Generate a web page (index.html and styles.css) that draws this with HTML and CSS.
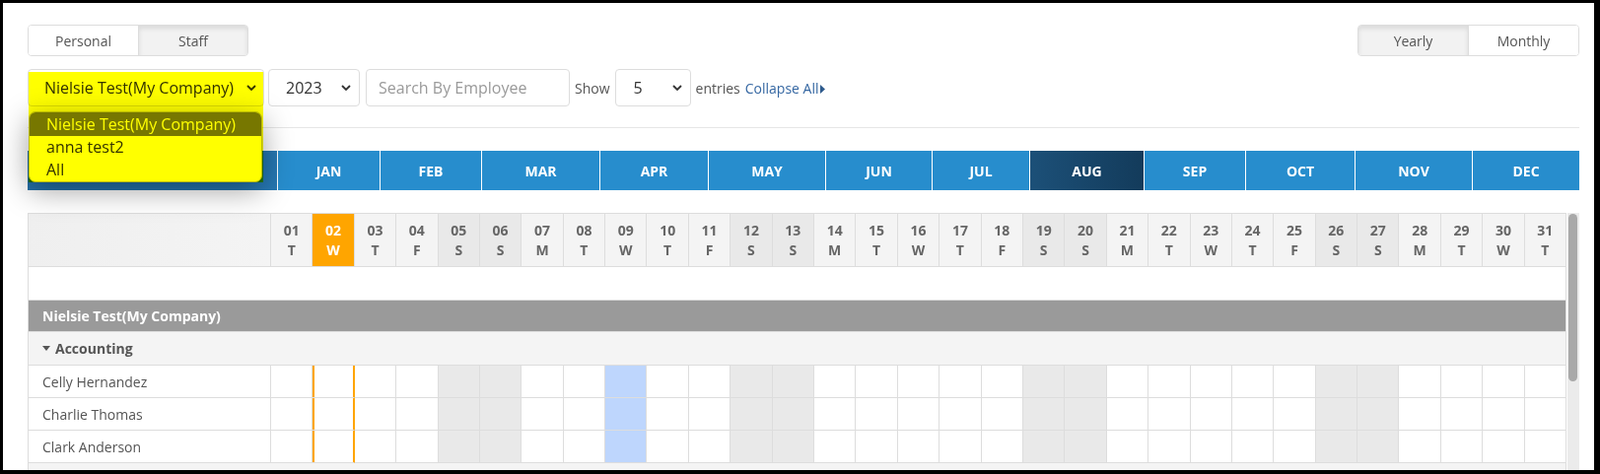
FILE: index.html
```html
<!DOCTYPE html>
<html lang="en">
<head>
    <meta charset="UTF-8">
    <title>Leave Calendar</title>

    <link rel="stylesheet" href="styles.css">
</head>
<body>
<div class="frame">
    <!-- View switches -->
    <div class="modes">
        <div class="seg">
            <button>Personal</button>
            <button class="on">Staff</button>
        </div>
        <div class="seg seg-right">
            <button class="on">Yearly</button>
            <button>Monthly</button>
        </div>
    </div>

    <!-- Filters -->
    <div class="filters">
        <div class="company-pick">
            <div class="select company">
                Nielsie Test(My Company)
                <svg class="chev" width="10" height="6" viewBox="0 0 10 6"><polyline points="1,1 5,5 9,1" fill="none" stroke="#333" stroke-width="1.8"/></svg>
            </div>
            <ul class="options">
                <li class="picked">Nielsie Test(My Company)</li>
                <li>anna test2</li>
                <li>All</li>
            </ul>
            <div class="marker"></div>
        </div>
        <div class="select year">
            2023
            <svg class="chev" width="10" height="6" viewBox="0 0 10 6"><polyline points="1,1 5,5 9,1" fill="none" stroke="#333" stroke-width="1.8"/></svg>
        </div>
        <input class="search" type="text" placeholder="Search By Employee">
        <span class="label">Show</span>
        <div class="select entries">
            5
            <svg class="chev" width="10" height="6" viewBox="0 0 10 6"><polyline points="1,1 5,5 9,1" fill="none" stroke="#333" stroke-width="1.8"/></svg>
        </div>
        <span class="label">entries</span>
        <a class="collapse" href="#">Collapse All<svg width="5" height="9" viewBox="0 0 5 9"><polygon points="0,0 5,4.5 0,9" fill="#2d5a8c"/></svg></a>
    </div>

    <div class="rule"></div>

    <!-- Month strip -->
    <div class="months">
        <div class="month first"></div>
        <div class="month">JAN</div>
        <div class="month">FEB</div>
        <div class="month">MAR</div>
        <div class="month">APR</div>
        <div class="month">MAY</div>
        <div class="month">JUN</div>
        <div class="month">JUL</div>
        <div class="month current">AUG</div>
        <div class="month">SEP</div>
        <div class="month">OCT</div>
        <div class="month">NOV</div>
        <div class="month">DEC</div>
    </div>

    <!-- Day grid -->
    <div class="sheet">
        <div class="grid" id="grid"></div>
        <div class="scrollbar"><div class="thumb"></div></div>
    </div>
</div>

<script src="script.js"></script>
</body>
</html>
```

FILE: styles.css
```css
body {
    margin: 0;
    background-color: #000;
    font-family: "Open Sans", "Liberation Sans", sans-serif;
    color: #555;
}

.frame {
    box-sizing: border-box;
    margin: 3px 6px 0 3px;
    height: 474px;
    padding: 22px 15px 0 25px;
    background-color: #fff;
    overflow: hidden;
}

/* Personal / Staff and Yearly / Monthly */
.modes {
    display: flex;
    justify-content: space-between;
}

.seg {
    display: flex;
    height: 32px;
    border: 1px solid #ddd;
    border-radius: 4px;
    box-sizing: border-box;
    overflow: hidden;
}

.seg button {
    width: 111px;
    border: none;
    background-color: #fff;
    font-family: inherit;
    font-size: 14px;
    color: #555;
    padding: 0;
}

.seg button + button {
    border-left: 1px solid #ddd;
}

.seg-right button + button {
    width: 112px;
}

.seg .on {
    background-color: #f2f2f2;
    box-shadow: inset 0 3px 5px rgba(0, 0, 0, 0.1);
}

/* Filter row */
.filters {
    display: flex;
    align-items: center;
    height: 38px;
    margin-top: 13px;
}

.company-pick {
    position: relative;
}

.select {
    box-sizing: border-box;
    display: flex;
    align-items: center;
    justify-content: space-between;
    height: 38px;
    border: 1px solid #ddd;
    border-radius: 4px;
    font-size: 16px;
    color: #333;
    background-color: #fff;
}

.chev {
    flex-shrink: 0;
}

.company {
    width: 240px;
    padding: 0 7px 0 16px;
}

.year {
    width: 93px;
    margin-left: 4px;
    padding: 0 8px 0 17px;
}

.entries {
    width: 77px;
    padding: 0 8px 0 18px;
}

.search {
    box-sizing: border-box;
    width: 207px;
    height: 38px;
    margin-left: 6px;
    padding: 0 12px;
    border: 1px solid #ddd;
    border-radius: 4px;
    font-family: inherit;
    font-size: 16px;
    color: #333;
}

.search::placeholder {
    color: #9a9a9a;
}

.label {
    font-size: 14px;
    color: #555;
    margin: 0 5px;
}

.collapse {
    font-size: 14px;
    color: #3567a2;
    text-decoration: none;
}

.collapse svg {
    margin-left: 1px;
}

/* Open option list, with the yellow marker drawn over it */
.options {
    position: absolute;
    z-index: 2;
    left: 1px;
    top: 43px;
    width: 235px;
    margin: 0;
    padding: 0;
    list-style: none;
    background-color: #fff;
    border: 1px solid #bbb;
    border-radius: 7px;
    box-shadow: 0 8px 30px rgba(0, 0, 0, 0.38);
    overflow: hidden;
    font-size: 16px;
    color: #333;
}

.options li {
    height: 23px;
    line-height: 23px;
    padding-left: 17px;
}

.options .picked {
    height: 24px;
    line-height: 24px;
    background-color: #777;
    color: #fff;
}

.marker {
    position: absolute;
    z-index: 3;
    left: 1px;
    top: 3px;
    width: 238px;
    height: 112px;
    background-color: #ffff00;
    mix-blend-mode: multiply;
    pointer-events: none;
}

.rule {
    height: 1px;
    margin-top: 21px;
    background-color: #e6e6e6;
}

/* Month strip */
.months {
    display: grid;
    grid-template-columns: 253px 104px 103px 120px 110px 119px 108px 99px 116px 103px 111px 119px 109px;
    height: 40px;
    margin-top: 23px;
    background-color: #278dcd;
}

.month {
    display: flex;
    align-items: center;
    justify-content: center;
    border-left: 1px solid #fff;
    color: #fff;
    font-size: 14px;
    font-weight: 700;
}

.month.first {
    border-left: none;
    background: linear-gradient(to right, #2470a8, #2677b2);
}

.month.current {
    background: linear-gradient(to right, #1c5078, #133b5b);
}

/* Day grid */
.sheet {
    display: flex;
    margin-top: 23px;
}

.grid {
    flex: 1;
    display: grid;
    grid-template-columns: 246px repeat(31, 1fr);
    border-left: 1px solid #ddd;
    border-top: 1px solid #ddd;
}

.cell {
    box-sizing: border-box;
    border-right: 1px solid #ddd;
    border-bottom: 1px solid #ddd;
    height: 33px;
}

.head {
    height: 54px;
    background-color: #f4f4f4;
    display: flex;
    flex-direction: column;
    justify-content: center;
    align-items: center;
    font-size: 14px;
    font-weight: 700;
    line-height: 20px;
    color: #666;
}

.head.corner {
    background: linear-gradient(to right, #efefef, #f4f4f4);
}

.weekend {
    background-color: #e9e9e9;
}

.head.today {
    background-color: #ffa500;
    color: #fff;
}

.day.today {
    border-right-color: #ffa500;
    box-shadow: inset 2px 0 #ffa500, inset -1px 0 #ffa500;
}

.day.booked {
    background-color: #bed6fd;
}

.wide {
    grid-column: 1 / -1;
    display: flex;
    align-items: center;
    padding-left: 14px;
    font-size: 14px;
}

.blank {
    height: 34px;
    background-color: #fff;
}

.company-row {
    height: 32px;
    background-color: #9a9a9a;
    color: #fff;
    font-weight: 700;
}

.dept {
    height: 34px;
    background-color: #f4f4f4;
    font-weight: 700;
}

.dept:not(:empty)::before {
    content: '';
    border-left: 4px solid transparent;
    border-right: 4px solid transparent;
    border-top: 5px solid #555;
    margin-right: 5px;
}

.name {
    display: flex;
    align-items: center;
    padding-left: 14px;
    font-size: 14px;
    color: #555;
}

.scrollbar {
    width: 12px;
    background-color: #ebebeb;
    border-left: 1px solid #fff;
}

.thumb {
    height: 170px;
    margin: 1px 2px 0 1px;
    border-radius: 5px;
    background-color: #a9a9a9;
}
```

FILE: script.js
```js
// Letters for January, as the calendar shows them
const letters = ['T', 'W', 'T', 'F', 'S', 'S', 'M', 'T', 'W', 'T', 'F', 'S', 'S', 'M', 'T', 'W',
    'T', 'F', 'S', 'S', 'M', 'T', 'W', 'T', 'F', 'S', 'S', 'M', 'T', 'W', 'T'];
const weekends = [5, 6, 12, 13, 19, 20, 26, 27];
const today = 2;
const booked = 9;

const rows = [
    {type: 'blank'},
    {type: 'company-row', text: 'Nielsie Test(My Company)'},
    {type: 'dept', text: 'Accounting'},
    {type: 'emp', text: 'Celly Hernandez'},
    {type: 'emp', text: 'Charlie Thomas'},
    {type: 'emp', text: 'Clark Anderson'},
    {type: 'dept'}
];

const grid = document.getElementById('grid');
let html = '<div class="cell head corner"></div>';

letters.forEach(function (letter, i) {
    const d = i + 1;
    let cls = 'cell head';
    if (weekends.includes(d)) cls += ' weekend';
    if (d === today) cls += ' today';
    html += `<div class="${cls}"><span>${String(d).padStart(2, '0')}</span><span>${letter}</span></div>`;
});

rows.forEach(function (row) {
    if (row.type !== 'emp') {
        html += `<div class="cell wide ${row.type}">${row.text || ''}</div>`;
        return;
    }
    html += `<div class="cell name">${row.text}</div>`;
    for (let d = 1; d <= 31; d++) {
        let cls = 'cell day';
        if (weekends.includes(d)) cls += ' weekend';
        if (d === today) cls += ' today';
        if (d === booked) cls += ' booked';
        html += `<div class="${cls}"></div>`;
    }
});

grid.innerHTML = html;
```
